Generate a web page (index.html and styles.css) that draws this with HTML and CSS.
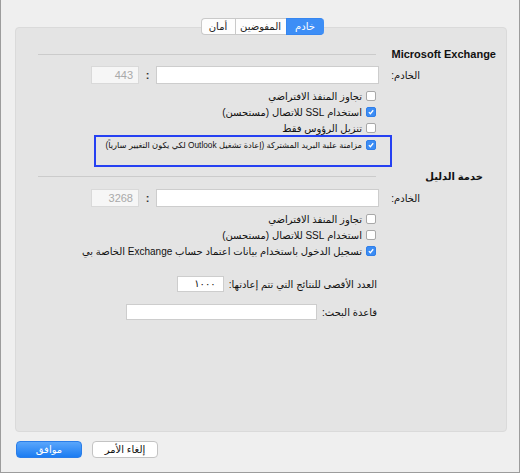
FILE: index.html
```html
<!DOCTYPE html>
<html lang="ar">
<head>
    <meta charset="UTF-8">
    <title>Exchange</title>
    <link rel="stylesheet" href="styles.css">
</head>
<body>
    <div class="window">
        <!-- segmented tabs sitting on the top edge of the panel -->
        <div class="tabs">
            <span class="tab">أمان</span><span class="tab">المفوضين</span><span class="tab active">خادم</span>
        </div>

        <section class="panel" dir="rtl">
            <div class="section-head head-exchange">
                <h2>Microsoft Exchange</h2>
                <span class="rule"></span>
            </div>
            <div class="server-row">
                <label class="field-label">الخادم:</label>
                <span class="input server"></span>
                <span class="colon">:</span>
                <span class="input port">443</span>
            </div>
            <div class="check-row first">
                <span class="cb"></span>
                <span>تجاوز المنفذ الافتراضي</span>
            </div>
            <div class="check-row">
                <span class="cb on"><svg viewBox="0 0 10 10"><polyline points="2.3,5.2 4.2,7.1 7.8,2.8"/></svg></span>
                <span>استخدام SSL للاتصال (مستحسن)</span>
            </div>
            <div class="check-row">
                <span class="cb"></span>
                <span>تنزيل الرؤوس فقط</span>
            </div>
            <div class="highlight">
                <div class="check-row">
                    <span class="cb on"><svg viewBox="0 0 10 10"><polyline points="2.3,5.2 4.2,7.1 7.8,2.8"/></svg></span>
                    <span class="long">مزامنة علبة البريد المشتركة (إعادة تشغيل Outlook لكي يكون التغيير سارياً)</span>
                </div>
            </div>

            <div class="section-head head-directory">
                <h2>خدمة الدليل</h2>
                <span class="rule"></span>
            </div>
            <div class="server-row dir-server">
                <label class="field-label">الخادم:</label>
                <span class="input server"></span>
                <span class="colon">:</span>
                <span class="input port">3268</span>
            </div>
            <div class="check-row first">
                <span class="cb"></span>
                <span>تجاوز المنفذ الافتراضي</span>
            </div>
            <div class="check-row">
                <span class="cb"></span>
                <span>استخدام SSL للاتصال (مستحسن)</span>
            </div>
            <div class="check-row">
                <span class="cb on"><svg viewBox="0 0 10 10"><polyline points="2.3,5.2 4.2,7.1 7.8,2.8"/></svg></span>
                <span>تسجيل الدخول باستخدام بيانات اعتماد حساب Exchange الخاصة بي</span>
            </div>

            <div class="pair-row max-row">
                <label>العدد الأقصى للنتائج التي تتم إعادتها:</label>
                <span class="input small">١٠٠٠</span>
            </div>
            <div class="pair-row base-row">
                <label>قاعدة البحث:</label>
                <span class="input wide"></span>
            </div>
        </section>

        <div class="buttons">
            <button class="btn primary">موافق</button>
            <button class="btn">إلغاء الأمر</button>
        </div>
    </div>
</body>
</html>
```

FILE: styles.css
```css
* {
    margin: 0;
    padding: 0;
    box-sizing: border-box;
}

body {
    width: 520px;
    height: 473px;
    font-family: "Liberation Sans", "DejaVu Sans", sans-serif;
    font-size: 10px;
    color: #111;
    background: #efefef;
}

.window {
    width: 520px;
    height: 473px;
    padding-top: 18px;
    background: #efefef;
    border: 1px solid #9c9c9c;
    border-top: none;
}

/* tabs */
.tabs {
    position: relative;
    z-index: 1;
    display: flex;
    justify-content: center;
    height: 17px;
    margin-left: 4px;
}

.tab {
    display: flex;
    align-items: center;
    justify-content: center;
    height: 17px;
    background: #fdfdfd;
    border: 1px solid #c9c9c9;
    border-right: none;
    font-size: 10px;
    color: #222;
}

.tab:nth-child(1) {
    width: 34px;
    border-radius: 4px 0 0 4px;
}

.tab:nth-child(2) {
    width: 51px;
}

.tab.active {
    width: 38px;
    background: #3d8ef6;
    border-color: #3686f0;
    color: #fff;
    border-radius: 0 4px 4px 0;
}

/* main panel */
.panel {
    height: 405px;
    margin: -8px 12px 0 14px;
    padding-top: 19px;
    background: #e4e4e4;
    border: 1px solid #dadada;
    border-radius: 4px;
}

.section-head {
    display: flex;
    justify-content: space-between;
    align-items: center;
    height: 14px;
}

.section-head h2 {
    font-size: 11px;
    font-weight: bold;
    color: #111;
    margin-right: 10px;
}

.head-directory {
    margin-top: 2px;
}

.head-directory h2 {
    margin-right: 23px;
    font-size: 10px;
}

.rule {
    width: 338px;
    height: 1px;
    margin-left: 22px;
    background: #cbcbcb;
}

.server-row {
    display: flex;
    align-items: center;
    height: 18px;
    margin-top: 5px;
}

.dir-server {
    margin-top: 6px;
}

.field-label {
    width: 41px;
    margin-right: 86px;
}

.input {
    display: block;
    height: 18px;
    background: #fff;
    border: 1px solid #cdcdcd;
    padding: 0 5px;
    line-height: 16px;
}

.server {
    width: 223px;
}

.colon {
    width: 17px;
    text-align: center;
    font-size: 11px;
    font-weight: bold;
    color: #333;
}

.port {
    width: 48px;
    background: #f6f6f6;
    border-color: #d9d9d9;
    color: #a9a9a9;
    direction: ltr;
    text-align: right;
    font-size: 11px;
}

.check-row {
    display: flex;
    align-items: center;
    gap: 4px;
    height: 16px;
    margin-right: 130px;
    white-space: nowrap;
}

.check-row.first {
    margin-top: 4px;
}

.long {
    font-size: 8.3px;
}

.cb {
    display: block;
    flex: none;
    width: 10px;
    height: 10px;
    background: #fff;
    border: 1px solid #a8a8a8;
    border-radius: 2px;
}

.cb.on {
    background: #3b8cf4;
    border-color: #2f7ee8;
}

.cb svg {
    display: block;
    width: 8px;
    height: 8px;
}

.cb svg polyline {
    fill: none;
    stroke: #fff;
    stroke-width: 1.6;
}

.highlight {
    width: 298px;
    height: 32px;
    margin: -1px 114px 0 0;
    padding-right: 14px;
    border: 2px solid #2540f2;
}

.highlight .check-row {
    margin-right: 0;
}

.pair-row {
    display: flex;
    align-items: center;
    gap: 5px;
    margin-right: 129px;
}

.max-row {
    margin-top: 17px;
}

.max-row .input {
    height: 16px;
    line-height: 14px;
}

.small {
    width: 47px;
    padding-right: 7px;
}

.base-row {
    margin-top: 12px;
}

.wide {
    width: 191px;
    height: 16px;
}

/* bottom buttons */
.buttons {
    display: flex;
    gap: 10px;
    margin: 9px 0 0 15px;
}

.btn {
    width: 66px;
    height: 17px;
    font-family: "Liberation Sans", "DejaVu Sans", sans-serif;
    font-size: 10px;
    color: #111;
    background: #fff;
    border: 1px solid #c3c3c3;
    border-radius: 4px;
}

.btn.primary {
    color: #fff;
    background: linear-gradient(#5aa6fb, #1b7cf2);
    border-color: #2a7de8;
}
```
